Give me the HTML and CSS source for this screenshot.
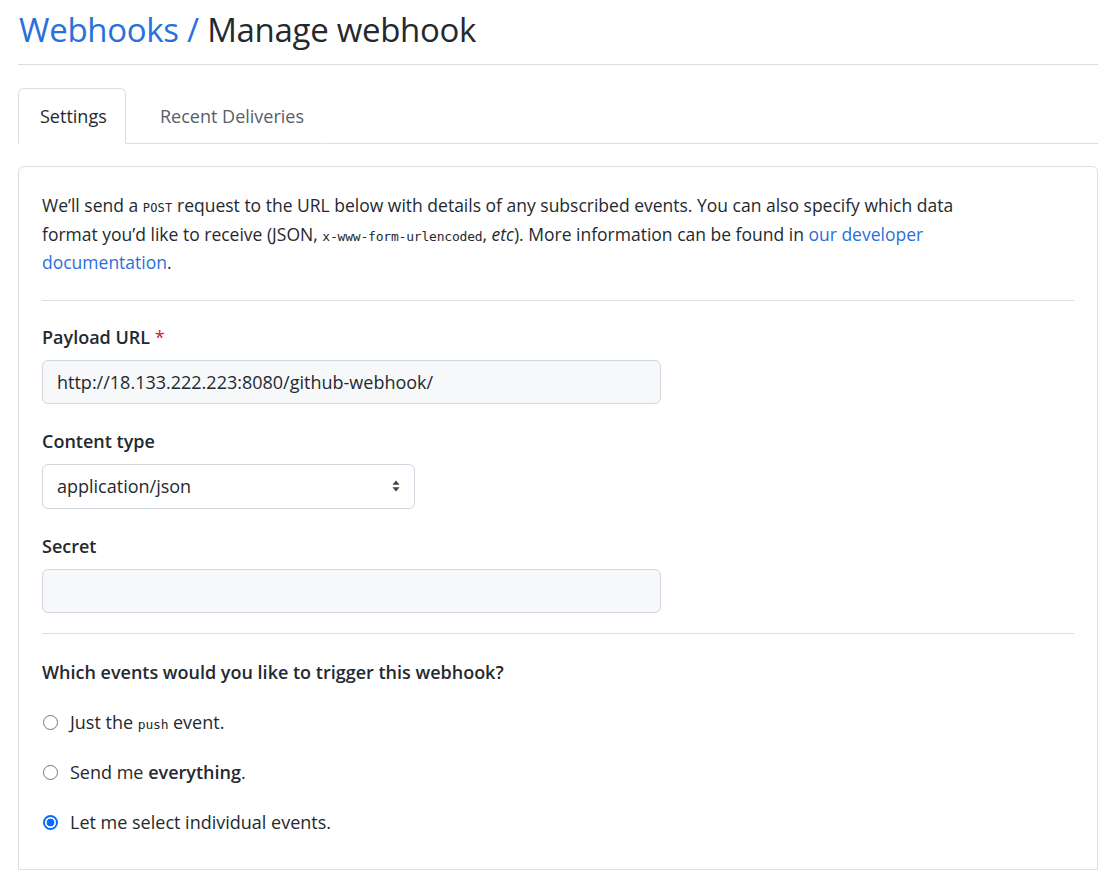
FILE: index.html
```html
<!DOCTYPE html>
<html lang="en">
<head>
<meta charset="utf-8">
<title>Manage webhook</title>
<link rel="stylesheet" href="styles.css">
</head>
<body>
<div class="page">
  <div class="subhead">
    <h1 class="subhead-heading"><a class="crumb" href="#">Webhooks</a><span class="crumb-sep"> / </span>Manage webhook</h1>
  </div>
  <nav class="tabnav">
    <a class="tab selected" href="#">Settings</a>
    <a class="tab" href="#">Recent Deliveries</a>
    <div class="tab-fill"></div>
  </nav>
  <div class="box">
    <p class="intro">We’ll send a <code class="mono small">POST</code> request to the URL below with details of any subscribed events. You can also specify which data format you’d like to receive (JSON, <code class="mono">x-www-form-urlencoded</code>, <em>etc</em>). More information can be found in <a class="link" href="#">our developer documentation</a>.</p>
    <hr class="divider">
    <div class="field">
      <label class="label">Payload URL <span class="req">*</span></label>
      <div class="input wide">http://18.133.222.223:8080/github-webhook/</div>
    </div>
    <div class="field">
      <label class="label">Content type</label>
      <div class="select">
        <span>application/json</span>
        <svg class="updown" width="8" height="12" viewBox="0 0 8 12"><path d="M4 0.5 L7.6 4.8 H0.4 Z M4 11.5 L7.6 7.2 H0.4 Z" fill="#444"/></svg>
      </div>
    </div>
    <div class="field">
      <label class="label">Secret</label>
      <div class="input wide"></div>
    </div>
    <hr class="divider second">
    <h2 class="events-title">Which events would you like to trigger this webhook?</h2>
    <div class="radio-list">
      <div class="radio-row"><span class="radio"></span><span>Just the <code class="mono push">push</code> event.</span></div>
      <div class="radio-row"><span class="radio"></span><span>Send me <strong>everything</strong>.</span></div>
      <div class="radio-row"><span class="radio checked"></span><span>Let me select individual events.</span></div>
    </div>
  </div>
</div>
</body>
</html>
```
FILE: styles.css
```css
* { box-sizing: border-box; }
html, body { margin: 0; padding: 0; background: #ffffff; }
body {
  font-family: "Open Sans", "Noto Sans", sans-serif;
  color: #24292f;
  font-size: 18px;
  height: 870px;
  overflow: hidden;
}
.page {
  padding: 0 7px 0 18px;
}
.subhead {
  border-bottom: 1px solid #d8dee4;
  height: 65px;
  display: flex;
  align-items: flex-start;
}
.subhead-heading {
  margin: 0;
  padding-top: 9px;
  padding-left: 1px;
  font-size: 33px;
  font-weight: 400;
  line-height: 42px;
  color: #24292f;
  letter-spacing: -0.3px;
}
.crumb { color: #2a6fdb; text-decoration: none; }
.crumb-sep { color: #2a6fdb; }
.tabnav {
  display: flex;
  margin-top: 23px;
  height: 56px;
}
.tab {
  display: flex;
  align-items: center;
  height: 56px;
  padding: 0 22px;
  font-size: 18px;
  color: #57606a;
  text-decoration: none;
  border: 1px solid transparent;
  border-bottom: 1px solid #d8dee4;
  border-radius: 6px 6px 0 0;
  white-space: nowrap;
}
.tab.selected {
  color: #24292f;
  border-color: #d8dee4;
  border-bottom-color: #ffffff;
  padding: 0 10px 0 21px;
  width: 108px;
}
.tab + .tab { padding-left: 33px; }
.tab-fill {
  flex: 1;
  border-bottom: 1px solid #d8dee4;
}
.box {
  margin-top: 22px;
  border: 1px solid #d8dee4;
  border-radius: 6px 6px 0 0;
  padding: 24px 23px 40px 23px;
  height: 704px;
}
.intro {
  margin: 0;
  max-width: 952px;
  font-size: 17.5px;
  line-height: 28.5px;
  color: #24292f;
}
.mono {
  font-family: "DejaVu Sans Mono", "Liberation Mono", monospace;
  font-size: 13px;
  line-height: 1;
  color: #24292f;
  letter-spacing: -0.2px;
}
.mono.small { font-size: 12px; letter-spacing: 0.2px; }
.mono.push { font-size: 13px; }
.link { color: #2a6fdb; text-decoration: none; }
.divider {
  border: 0;
  border-top: 1px solid #d8dee4;
  margin: 23px 0 0 0;
  height: 0;
}
.divider.second { margin-top: 20px; }
.field {
  display: flex;
  flex-direction: column;
  align-items: flex-start;
  gap: 10px;
  padding-top: 24px;
}
.field + .field { padding-top: 25px; }
.label {
  font-weight: 600;
  font-size: 18px;
  line-height: 25px;
  color: #24292f;
}
.req { color: #cf222e; font-weight: 400; }
.input {
  height: 44px;
  border: 1px solid #d0d7de;
  border-radius: 6px;
  background: #f6f8fa;
  display: flex;
  align-items: center;
  padding: 0 14px;
  font-size: 18px;
  color: #24292f;
}
.input.wide { width: 619px; }
.select {
  width: 373px;
  height: 45px;
  border: 1px solid #d0d7de;
  border-radius: 6px;
  background: #ffffff;
  display: flex;
  align-items: center;
  justify-content: space-between;
  padding: 0 14px 0 14px;
  font-size: 18px;
  color: #24292f;
}
.updown { display: block; }
.events-title {
  margin: 26px 0 0 0;
  font-size: 18px;
  font-weight: 600;
  line-height: 25px;
  color: #24292f;
}
.radio-list {
  display: flex;
  flex-direction: column;
  gap: 25px;
  margin-top: 25px;
}
.radio-row {
  display: flex;
  align-items: center;
  gap: 12px;
  height: 25px;
  font-size: 18px;
  color: #24292f;
  padding-left: 1px;
}
.radio-row strong { font-weight: 600; }
.radio {
  width: 15px;
  height: 15px;
  border-radius: 50%;
  border: 1px solid #767676;
  background: #ffffff;
  flex: none;
}
.radio.checked {
  border: 2px solid #0a6cff;
  background: radial-gradient(circle, #0a6cff 0 3.6px, #ffffff 4.2px);
}
```
